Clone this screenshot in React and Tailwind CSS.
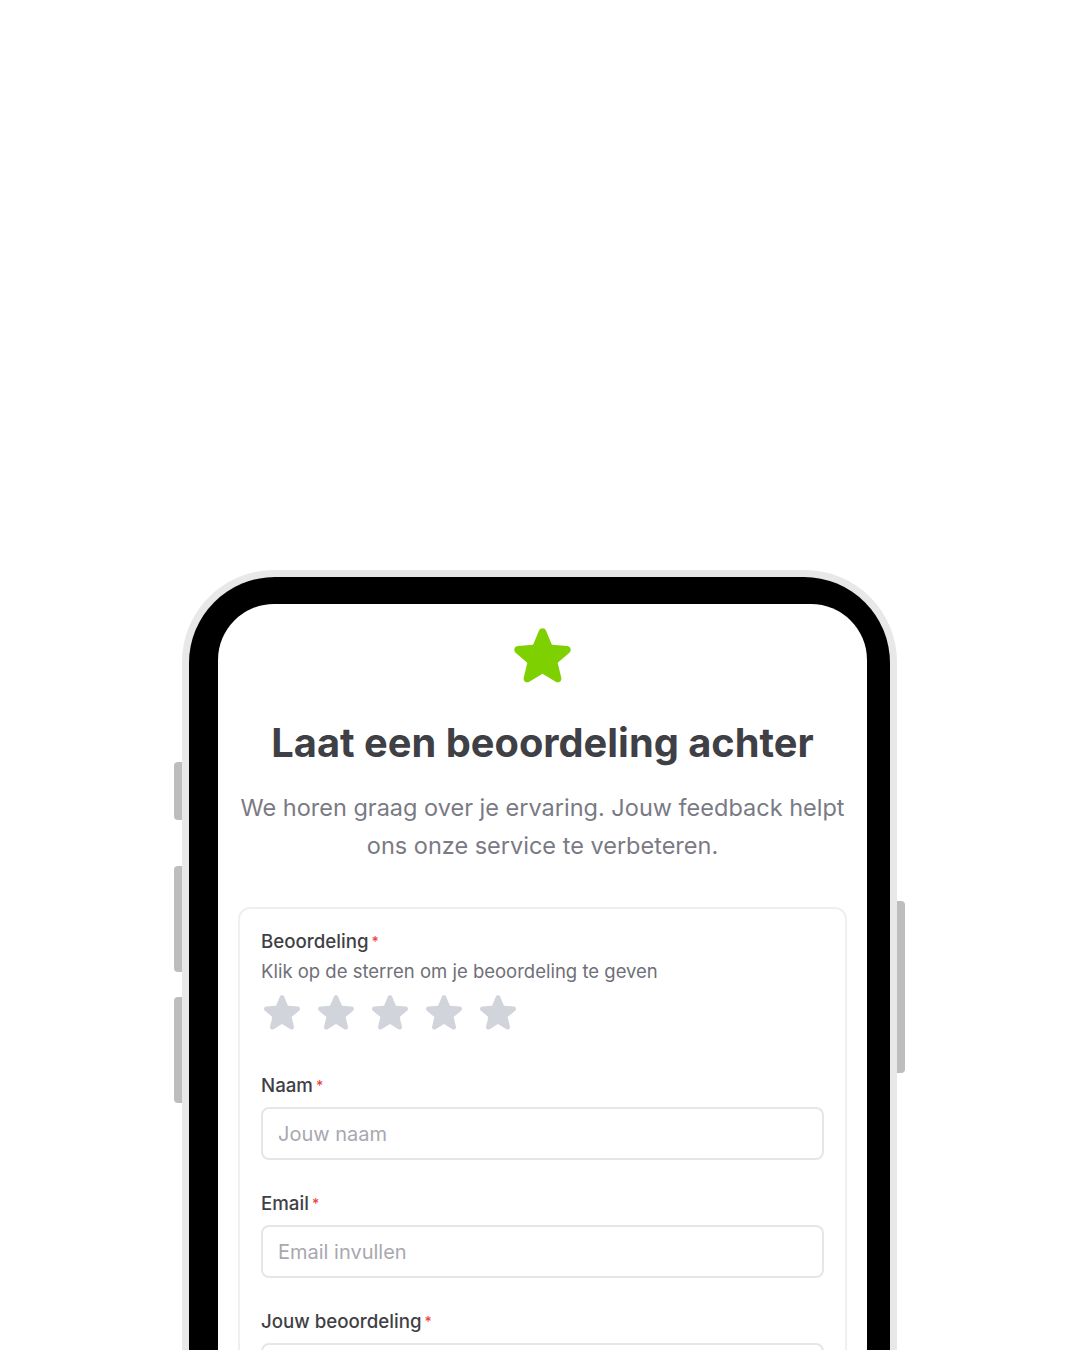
import React from 'react'

const starPath =
  'M10.788 3.21c.448-1.077 1.976-1.077 2.424 0l2.082 5.006 5.404.434c1.164.093 1.636 1.545.749 2.305l-4.117 3.527 1.257 5.273c.271 1.136-.964 2.033-1.96 1.425L12 18.354 7.373 21.18c-.996.608-2.231-.29-1.96-1.425l1.257-5.273-4.117-3.527c-.887-.76-.415-2.212.749-2.305l5.404-.434 2.082-5.005Z'

function Star({ className }) {
  return (
    <svg viewBox="2.1 2.3 19.8 19.3" className={className} fill="currentColor">
      <path d={starPath} fillRule="evenodd" clipRule="evenodd" />
    </svg>
  )
}

function Label({ children }) {
  return (
    <div className="text-[18.7px] leading-[28px] font-medium text-[#3f3f46]">
      {children}
      <span className="ml-[3px] text-[14px] align-top text-[#ef4444]">*</span>
    </div>
  )
}

function Field({ label, placeholder }) {
  return (
    <div className="flex flex-col gap-[7px]">
      <Label>{label}</Label>
      <div className="h-[53px] rounded-[8px] border-2 border-[#e6e6e9] flex items-center px-[15px] text-[20px] text-[#a8a8b0]">
        {placeholder}
      </div>
    </div>
  )
}

export default function App() {
  return (
    <div className="h-[1350px] overflow-hidden bg-white font-['Inter',sans-serif]">
      <div className="pt-[570px] pl-[182px]">
        <div className="relative w-[715px]">
          {/* side buttons */}
          <div className="absolute left-[-8px] top-[192px] w-[8px] h-[58px] rounded-l-[4px] bg-[#bdbdbd]" />
          <div className="absolute left-[-8px] top-[296px] w-[8px] h-[106px] rounded-l-[4px] bg-[#bdbdbd]" />
          <div className="absolute left-[-8px] top-[427px] w-[8px] h-[106px] rounded-l-[4px] bg-[#bdbdbd]" />
          <div className="absolute right-[-8px] top-[331px] w-[8px] h-[172px] rounded-r-[4px] bg-[#bdbdbd]" />

          <div className="bg-[#e8e8e8] rounded-t-[92px] pt-[7px] px-[7px]">
            <div className="bg-black rounded-t-[86px] pt-[27px] pl-[29px] pr-[23px]">
              <div className="bg-white rounded-t-[56px] pb-[100px] flex flex-col items-center pt-[24px]">
                <Star className="shrink-0 w-[57px] h-[55px] text-[#7ed000]" />
                <h1 className="mt-[36px] text-[39.8px] leading-[48px] font-bold text-[#3f3f46]">
                  Laat een beoordeling achter
                </h1>
                <p className="mt-[22px] text-[23.5px] leading-[38px] text-[#7a7a84] text-center">
                  We horen graag over je ervaring. Jouw feedback helpt
                  <br />
                  ons onze service te verbeteren.
                </p>

                <div className="mt-[42px] w-[609px] self-start ml-[20px] border-2 border-[#efeff1] rounded-[12px] px-[21px] pt-[19px] pb-[40px] flex flex-col">
                  <Label>Beoordeling</Label>
                  <div className="text-[18.5px] leading-[30px] text-[#6f6f78]">
                    Klik op de sterren om je beoordeling te geven
                  </div>
                  <div className="mt-[9px] flex gap-[18px] pl-[3px]">
                    {[0, 1, 2, 3, 4].map((i) => (
                      <Star key={i} className="shrink-0 w-[36px] h-[35px] text-[#d1d5db]" />
                    ))}
                  </div>

                  <div className="mt-[42px] flex flex-col gap-[30px]">
                    <Field label="Naam" placeholder="Jouw naam" />
                    <Field label="Email" placeholder="Email invullen" />
                    <Field label="Jouw beoordeling" placeholder="" />
                  </div>
                </div>
              </div>
            </div>
          </div>
        </div>
      </div>
    </div>
  )
}
